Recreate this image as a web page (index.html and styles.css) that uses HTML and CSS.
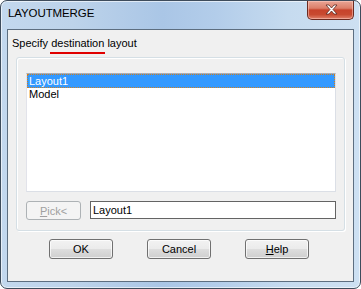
FILE: index.html
```html
<!DOCTYPE html>
<html>
<head>
<meta charset="utf-8">
<link rel="stylesheet" href="styles.css">
</head>
<body>
<div class="window">
  <div class="titlebar">
    <span class="title">LAYOUTMERGE</span>
    <div class="close">
      <svg width="47" height="19" viewBox="0 0 47 19">
        <path d="M18 5 L21 5 L23.5 8 L26 5 L29 5 L25 9.5 L29 14 L26 14 L23.5 11 L21 14 L18 14 L22 9.5 Z" fill="#ffffff" stroke="#5a2a22" stroke-width="0.8" stroke-linejoin="round"/>
      </svg>
    </div>
  </div>
  <div class="client">
    <div class="prompt">Specify <span class="mark">destination</span> layout</div>
    <div class="group">
      <div class="listbox">
        <div class="item selected">Layout1</div>
        <div class="item">Model</div>
      </div>
      <div class="pickrow">
        <div class="btn pick"><u>P</u>ick&lt;</div>
        <div class="textbox">Layout1</div>
      </div>
    </div>
    <div class="buttons">
      <div class="btn dlg">OK</div>
      <div class="btn dlg">Cancel</div>
      <div class="btn dlg"><u>H</u>elp</div>
    </div>
  </div>
</div>
</body>
</html>
```
FILE: styles.css
```css
html, body {
  margin: 0;
  padding: 0;
  background: #ffffff;
}
body {
  font-family: "Liberation Sans", Arial, sans-serif;
  font-size: 11px;
  color: #000;
}
.window {
  width: 361px;
  height: 289px;
  box-sizing: border-box;
  border: 1px solid #3e4c5c;
  border-radius: 7px;
  padding: 0 6px 6px 6px;
  display: flex;
  flex-direction: column;
  background: linear-gradient(to right, #c3d8ee 0%, #bdd3ea 20%, #aac6e6 45%, #b3cdea 60%, #c6dbef 80%, #cde0f2 100%);
  box-shadow: inset 0 0 0 1px rgba(255,255,255,0.6);
}
.titlebar {
  height: 28px;
  display: flex;
  justify-content: space-between;
  align-items: flex-start;
}
.title {
  margin-left: 1px;
  padding-top: 6px;
  font-size: 11.5px;
  color: #000;
  letter-spacing: -0.1px;
}
.close {
  width: 47px;
  height: 19px;
  box-sizing: border-box;
  border: 1px solid #6b2a20;
  border-top: none;
  border-radius: 0 0 5px 5px;
  background: linear-gradient(to bottom, #e9a595 0%, #dc7e69 40%, #c7432b 50%, #c84a30 75%, #e0806a 100%);
  box-shadow: inset 0 0 0 1px rgba(255,210,200,0.5);
}
.close svg { display: block; margin-top: -1px; }
.client {
  flex: 1;
  border: 1px solid #5d6e80;
  background: #f0f0f0;
  display: flex;
  flex-direction: column;
}
.prompt {
  padding: 7px 0 0 4px;
  line-height: 13px;
  height: 13px;
}
.mark {
  position: relative;
}
.mark::after {
  content: "";
  position: absolute;
  left: -1px;
  right: -1px;
  top: 15px;
  height: 2px;
  background: #e00000;
}
.group {
  margin: 7px 8px 0 8px;
  border: 1px solid #d5dfe5;
  border-radius: 3px;
  box-shadow: inset 1px 1px 0 #ffffff, 1px 1px 0 #ffffff;
  padding: 15px 8px 10px 9px;
  display: flex;
  flex-direction: column;
}
.listbox {
  height: 119px;
  box-sizing: border-box;
  border: 1px solid #dbdfe6;
  border-top-color: #abadb3;
  border-left-color: #e2e3ea;
  background: #ffffff;
}
.item {
  height: 14px;
  line-height: 13px;
  padding-left: 2px;
  box-sizing: border-box;
}
.item.selected {
  background: #3399ff;
  color: #ffffff;
  border: 1px dotted #d08020;
  padding-left: 1px;
  line-height: 12px;
}
.pickrow {
  margin-top: 9px;
  display: flex;
  gap: 9px;
}
.btn {
  box-sizing: border-box;
  display: flex;
  align-items: center;
  justify-content: center;
  border-radius: 3px;
}
.pick {
  width: 55px;
  height: 19px;
  border: 1px solid #adb2b5;
  background: #f4f4f4;
  color: #a0a0a0;
}
.textbox {
  flex: 1;
  height: 18px;
  box-sizing: border-box;
  border: 1px solid #646464;
  background: #ffffff;
  padding-left: 2px;
  line-height: 16px;
}
.buttons {
  margin-top: 8px;
  padding-left: 41px;
  display: flex;
  gap: 34px;
}
.dlg {
  width: 64px;
  height: 20px;
  border: 1px solid #707070;
  background: linear-gradient(to bottom, #f2f2f2 0%, #ebebeb 48%, #dddddd 52%, #cfcfcf 100%);
  box-shadow: inset 0 0 0 1px rgba(255,255,255,0.7);
}
u { text-decoration: underline; text-underline-offset: 1px; }
```
